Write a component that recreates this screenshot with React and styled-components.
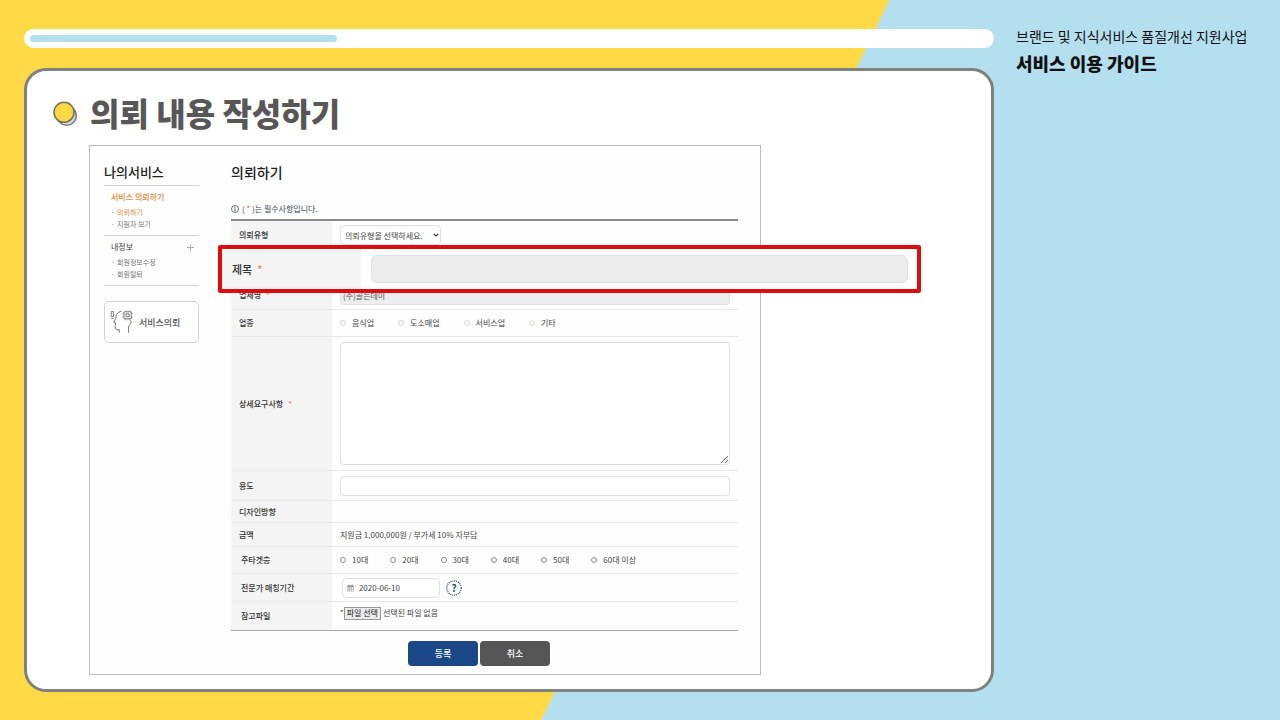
import {useRef, useState} from "react";
import styled, {createGlobalStyle} from "styled-components";

const industries = ["음식업", "도소매업", "서비스업", "기타"];
const ages = ["10대", "20대", "30대", "40대", "50대", "60대 이상"];

export default function App() {
  const [date, setDate] = useState("2020-06-10");
  const fileInput = useRef(null);

  return (
    <>
      <GlobalStyle />
      <Page>
        <Slide>
          <Progress role="progressbar" aria-valuenow={32}>
            <ProgressBar style={{width: "32%"}} />
          </Progress>
          <Panel>
            <PanelHeader>
              <Bullet />
              <PanelTitle>의뢰 내용 작성하기</PanelTitle>
            </PanelHeader>
            <Frame>
              <aside>
                <SideTitle>나의서비스</SideTitle>
                <SideGroup>
                  <SideLink href="#service" $active>
                    서비스 의뢰하기
                  </SideLink>
                  <SubLink href="#request" $active>
                    의뢰하기
                  </SubLink>
                  <SubLink href="#applicants">지원자 보기</SubLink>
                </SideGroup>
                <SideGroup>
                  <SideLink href="#info">
                    내정보 <PlusIcon />
                  </SideLink>
                  <SubLink href="#edit">회원정보수정</SubLink>
                  <SubLink href="#leave">회원탈퇴</SubLink>
                </SideGroup>
                <ServiceButton type="button">
                  <HeadIcon />
                  서비스의뢰
                </ServiceButton>
              </aside>
              <form onSubmit={event => event.preventDefault()}>
                <FormTitle>의뢰하기</FormTitle>
                <Notice>
                  <InfoIcon />
                  <span>
                    ( <Star>*</Star> )는 필수사항입니다.
                  </span>
                </Notice>
                <Rows>
                  <Row $height={29}>
                    <RowLabel as="label" htmlFor="type">
                      의뢰유형
                    </RowLabel>
                    <Cell>
                      <SelectWrap>
                        <Select id="type">
                          <option>의뢰유형을 선택하세요.</option>
                        </Select>
                        <ChevronIcon />
                      </SelectWrap>
                    </Cell>
                  </Row>
                  <CalloutSlot>
                    <Callout>
                      <CalloutLabel htmlFor="subject">
                        제목 <RowStar>*</RowStar>
                      </CalloutLabel>
                      <CalloutInput id="subject" type="text" />
                    </Callout>
                  </CalloutSlot>
                  <Row $height={29}>
                    <RowLabel as="label" htmlFor="company">
                      업체명 <RowStar>*</RowStar>
                    </RowLabel>
                    <Cell>
                      <Input id="company" readOnly value="(주)골든데이" $filled />
                    </Cell>
                  </Row>
                  <Row $height={27} role="radiogroup" aria-label="업종">
                    <RowLabel>업종</RowLabel>
                    <Cell $gap={24}>
                      {industries.map(name => (
                        <RadioLabel key={name}>
                          <Radio type="radio" name="industry" $pale />
                          {name}
                        </RadioLabel>
                      ))}
                    </Cell>
                  </Row>
                  <Row $height={134}>
                    <RowLabel as="label" htmlFor="details">
                      상세요구사항 <RowStar>*</RowStar>
                    </RowLabel>
                    <Cell>
                      <TextArea id="details" />
                    </Cell>
                  </Row>
                  <Row $height={30}>
                    <RowLabel as="label" htmlFor="usage">
                      용도
                    </RowLabel>
                    <Cell>
                      <Input id="usage" type="text" />
                    </Cell>
                  </Row>
                  <Row $height={22}>
                    <RowLabel>디자인방향</RowLabel>
                    <Cell />
                  </Row>
                  <Row $height={24}>
                    <RowLabel>금액</RowLabel>
                    <Cell>지원금 1,000,000원 / 부가세 10% 자부담</Cell>
                  </Row>
                  <Row $height={27} role="radiogroup" aria-label="주타겟층">
                    <RowLabel $indent>주타겟층</RowLabel>
                    <Cell $gap={22}>
                      {ages.map(age => (
                        <RadioLabel key={age}>
                          <Radio type="radio" name="age" />
                          {age}
                        </RadioLabel>
                      ))}
                    </Cell>
                  </Row>
                  <Row $height={28}>
                    <RowLabel as="label" htmlFor="period" $indent>
                      전문가 매칭기간
                    </RowLabel>
                    <Cell $gap={6}>
                      <DateBox>
                        <CalendarIcon />
                        <DateInput
                          id="period"
                          type="text"
                          value={date}
                          onChange={event => setDate(event.target.value)}
                        />
                      </DateBox>
                      <HelpButton type="button">
                        <HelpRing />?
                      </HelpButton>
                    </Cell>
                  </Row>
                  <Row $height={29} $last>
                    <RowLabel as="label" htmlFor="file" $indent>
                      참고파일
                    </RowLabel>
                    <FileCell>
                      *
                      <FileButton
                        type="button"
                        onClick={() => fileInput.current.click()}
                      >
                        파일 선택
                      </FileButton>
                      <input id="file" type="file" ref={fileInput} hidden />
                      선택된 파일 없음
                    </FileCell>
                  </Row>
                </Rows>
                <Actions>
                  <ActionButton type="submit" $primary>
                    등록
                  </ActionButton>
                  <ActionButton type="button">취소</ActionButton>
                </Actions>
              </form>
            </Frame>
          </Panel>
        </Slide>
        <Guide>
          <GuideProject>브랜드 및 지식서비스 품질개선 지원사업</GuideProject>
          <GuideTitle>서비스 이용 가이드</GuideTitle>
        </Guide>
      </Page>
    </>
  );
}

function Bullet() {
  return (
    <BulletSvg viewBox="0 0 24 26" aria-hidden="true">
      <circle cx="13.7" cy="14.7" r="9.6" fill="#d9d9d9" stroke="#7c7c7c" strokeWidth="1.6" />
      <circle cx="11" cy="11.3" r="10" fill="#ffd944" stroke="#77735f" strokeWidth="1.6" />
    </BulletSvg>
  );
}

function PlusIcon() {
  return (
    <svg width="7" height="7" viewBox="0 0 7 7" aria-hidden="true">
      <path d="M3.5 0v7M0 3.5h7" stroke="#b0b0b0" />
    </svg>
  );
}

function HeadIcon() {
  return (
    <svg width="24" height="24" viewBox="0 0 24 24" fill="none" stroke="#777" aria-hidden="true">
      <path d="M1.2 1.5h2.2v5.2H1.2zM1.3 8.5h2" strokeWidth=".9" />
      <path d="M11.5 1.2C7.8 1.8 5.8 4.6 5.9 8.2L3.6 12.2l2 .8v2.2l-1 .9 1.1.9v1.9c.2 1 1.4.9 3.6.7v3.1" />
      <path d="M20.6 10.2c1.7 2.4-1.4 4.4-2 6.6-.3 2 .1 4 .1 6" />
      <path d="M14 1.8h7.2v7H14zM16 3.8h3.2v3H16z" />
      <path d="M12.3 3.5H14m-1.7 3.6H14M21.2 3.5H23m-1.8 3.6H23M16 .4v1.4M19.3.4v1.4M16 8.8v1.6M19.3 8.8v1.6" strokeWidth=".7" />
    </svg>
  );
}

function InfoIcon() {
  return (
    <svg width="8" height="8" viewBox="0 0 8 8" aria-hidden="true">
      <circle cx="4" cy="4" r="3.5" fill="none" stroke="#4a5566" strokeWidth=".8" />
      <path d="M4 1.7v.9M4 3.4v2.9" stroke="#4a5566" />
    </svg>
  );
}

function CalendarIcon() {
  return (
    <svg width="8" height="8" viewBox="0 0 8 8" aria-hidden="true">
      <path d="M.5 1h7v2.2h-7z" fill="#8a8a8a" />
      <path d="M2 0v1.5M6 0v1.5" stroke="#8a8a8a" />
      <path d="M.5 3.2v4.3h7V3.2M.5 5.2h7M2.8 3.2v4.3M5.2 3.2v4.3" fill="none" stroke="#a5a5a5" strokeWidth=".8" />
    </svg>
  );
}

function HelpRing() {
  return (
    <Ring viewBox="0 0 16 16" aria-hidden="true">
      <circle cx="8" cy="8" r="7.2" fill="none" stroke="#2c4f86" strokeWidth="1.2" strokeDasharray="1.1 .9" />
    </Ring>
  );
}

function ChevronIcon() {
  return (
    <Chevron viewBox="0 0 6 4" aria-hidden="true">
      <path d="M.8.8 3 2.9 5.2.8" fill="none" stroke="#333" strokeWidth="1.1" />
    </Chevron>
  );
}

const GlobalStyle = createGlobalStyle`
  * {
    box-sizing: border-box;
  }
  body {
    margin: 0;
    font-family: "Noto Sans CJK KR", "Noto Sans", sans-serif;
  }
  h1, h2, h3, p {
    margin: 0;
  }
  button, input, select, textarea {
    font-family: inherit;
    margin: 0;
  }
`;

const Page = styled.main`
  display: grid;
  grid-template-columns: minmax(0, 1fr) 264px;
  column-gap: 22px;
  min-height: 100vh;
  padding: 29px 0 28px 24px;
  background: linear-gradient(115.8deg, #ffda46 54.6%, #b4dfef 54.65%);
`;
const Slide = styled.div`
  display: flex;
  flex-direction: column;
  gap: 20px;
`;
const Progress = styled.div`
  padding: 6px;
  border-radius: 10px;
  background: white;
`;
const ProgressBar = styled.div`
  height: 7px;
  border-radius: 4px;
  background: #b4dfef;
`;
const Panel = styled.section`
  flex: 1;
  padding: 25px 0 14px 26px;
  border: 3px solid #7f8080;
  border-radius: 22px;
  background: white;
`;
const PanelHeader = styled.header`
  display: flex;
  align-items: flex-start;
  gap: 13px;
`;
const BulletSvg = styled.svg`
  width: 24px;
  height: 26px;
  margin-top: 5px;
`;
const PanelTitle = styled.h1`
  font-size: 32px;
  line-height: 32px;
  font-weight: 900;
  color: #575757;
`;
const Frame = styled.div`
  display: grid;
  grid-template-columns: 95px minmax(0, 1fr);
  column-gap: 32px;
  margin: 17px 230px 0 36px;
  padding: 16px 22px 8px 14px;
  border: 1px solid #bcbcbc;
  background: #fefefe;
`;

const SideTitle = styled.h2`
  padding-bottom: 3px;
  font-size: 13px;
  line-height: 20px;
  font-weight: 500;
  color: #222;
`;
const SideGroup = styled.nav`
  display: flex;
  flex-direction: column;
  padding: 5px 5px 5px 7px;
  border-top: 1px solid #d4d4d4;

  & + & {
    border-bottom: 1px solid #d4d4d4;
  }
`;
const SideLink = styled.a`
  display: flex;
  align-items: center;
  justify-content: space-between;
  margin-bottom: 3px;
  font-size: 8px;
  line-height: 12px;
  font-weight: ${({$active}) => ($active ? 500 : 400)};
  color: ${({$active}) => ($active ? "#e08a3c" : "#444")};
  text-decoration: none;
`;
const SubLink = styled.a`
  font-size: 7px;
  line-height: 12px;
  color: ${({$active}) => ($active ? "#e08a3c" : "#777")};
  text-decoration: none;

  &::before {
    content: "·";
    display: inline-block;
    width: 6px;
  }
`;
const ServiceButton = styled.button`
  display: flex;
  align-items: center;
  gap: 5px;
  width: 100%;
  height: 42px;
  margin-top: 15px;
  padding: 0 5px;
  border: 1px solid #d4d4d4;
  border-radius: 5px;
  background: white;
  font-size: 9px;
  font-weight: 500;
  color: #555;
`;

const FormTitle = styled.h2`
  font-size: 14px;
  line-height: 20px;
  font-weight: 500;
  color: #222;
`;
const Notice = styled.p`
  display: flex;
  align-items: center;
  gap: 3px;
  margin: 22px 0 5px;
  font-size: 8px;
  line-height: 10px;
  color: #3c4656;
`;
const Star = styled.span`
  color: #e0503c;
`;
const Rows = styled.div`
  border-top: 2px solid #8a8a8a;
`;
const Row = styled.div`
  display: grid;
  grid-template-columns: 101px minmax(0, 1fr);
  min-height: ${({$height}) => $height}px;
  border-bottom: 1px solid ${({$last}) => ($last ? "#a8a8a8" : "#e8e8e8")};
`;
const RowLabel = styled.div`
  display: flex;
  align-items: center;
  gap: 5px;
  padding-left: ${({$indent}) => ($indent ? 10 : 8)}px;
  background: #f4f4f4;
  font-size: 8px;
  line-height: 12px;
  font-weight: 500;
  color: #333;
`;
const RowStar = styled.span`
  color: #ee8a3a;
`;
const Cell = styled.div`
  display: flex;
  align-items: center;
  gap: ${({$gap}) => $gap || 0}px;
  padding: 0 8px;
  font-size: 8px;
  line-height: 12px;
  color: #444;
`;
const FileCell = styled(Cell)`
  padding-bottom: 6px;
`;
const SelectWrap = styled.div`
  position: relative;
`;
const Select = styled.select`
  appearance: none;
  width: 101px;
  height: 20px;
  padding: 0 4px;
  border: 1px solid #e0e0e0;
  border-radius: 4px;
  background: white;
  font-size: 8px;
  color: #444;
`;
const Chevron = styled.svg`
  position: absolute;
  top: 8px;
  right: 2px;
  width: 6px;
  height: 4px;
`;
const Input = styled.input`
  width: 100%;
  height: 20px;
  padding: 0 2px;
  border: 1px solid #e0e0e0;
  border-radius: 4px;
  background: ${({$filled}) => ($filled ? "#ededed" : "white")};
  font-size: 8px;
  color: #555;
`;
const TextArea = styled.textarea`
  width: 100%;
  height: 123px;
  border: 1px solid #e0e0e0;
  border-radius: 4px;
  background: white;
  font-size: 8px;
`;
const RadioLabel = styled.label`
  display: flex;
  align-items: center;
  gap: 6px;
`;
const Radio = styled.input`
  appearance: none;
  width: 6px;
  height: 6px;
  border: 1px solid ${({$pale}) => ($pale ? "#d8d8d8" : "#8a8a8a")};
  border-radius: 50%;
  background: white;

  &:checked {
    background: #194787;
  }
`;
const DateBox = styled.div`
  display: flex;
  align-items: center;
  gap: 5px;
  width: 98px;
  height: 20px;
  margin-left: 2px;
  padding: 0 4px;
  border: 1px solid #e0e0e0;
  border-radius: 4px;
  background: white;
`;
const DateInput = styled.input`
  width: 100%;
  min-width: 0;
  padding: 0;
  border: none;
  background: none;
  font-size: 8px;
  color: #444;
`;
const HelpButton = styled.button`
  position: relative;
  width: 16px;
  height: 16px;
  padding: 0;
  border: none;
  background: none;
  font-size: 10px;
  line-height: 16px;
  font-weight: 700;
  color: #2c4f86;
`;
const Ring = styled.svg`
  position: absolute;
  inset: 0;
`;
const FileButton = styled.button`
  height: 13px;
  margin-right: 2px;
  padding: 0 2px;
  border: 1px solid #999;
  background: #ebebeb;
  font-size: 8px;
  line-height: 10px;
  color: #222;
`;

const CalloutSlot = styled.div`
  position: relative;
  height: 31px;
`;
const Callout = styled.div`
  position: absolute;
  z-index: 1;
  top: -5px;
  left: -13px;
  right: -183px;
  display: grid;
  grid-template-columns: 139px minmax(0, 1fr);
  align-items: center;
  height: 48px;
  padding-right: 9px;
  border: 4px solid #dc0c10;
  border-radius: 2px;
  background: #fefefe;
`;
const CalloutLabel = styled.label`
  display: flex;
  align-items: center;
  gap: 5px;
  height: 100%;
  padding-left: 10px;
  background: #f4f4f4;
  font-size: 11px;
  font-weight: 500;
  color: #333;
`;
const CalloutInput = styled.input`
  height: 28px;
  margin-left: 10px;
  padding: 0 6px;
  border: 1px solid #e0e0e0;
  border-radius: 6px;
  background: #ededed;
  font-size: 11px;
`;

const Actions = styled.div`
  display: flex;
  justify-content: center;
  gap: 2px;
  margin-top: 10px;
  padding-right: 11px;
`;
const ActionButton = styled.button`
  width: 70px;
  height: 25px;
  padding: 0;
  border: none;
  border-radius: 4px;
  background: ${({$primary}) => ($primary ? "#194787" : "#555")};
  font-size: 9px;
  font-weight: 500;
  color: white;
`;

const Guide = styled.aside`
  color: #111;
`;
const GuideProject = styled.p`
  font-size: 14px;
  line-height: 14px;
`;
const GuideTitle = styled.h2`
  margin-top: 9px;
  font-size: 18px;
  line-height: 22px;
  font-weight: 900;
`;
